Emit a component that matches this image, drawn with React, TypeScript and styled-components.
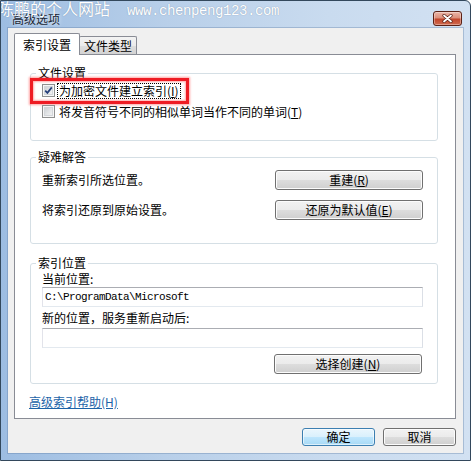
import React from "react";
import styled, { createGlobalStyle } from "styled-components";

const GlobalStyle = createGlobalStyle`
  html, body { margin: 0; padding: 0; background: #ffffff; }
  body {
    font-family: "Noto Sans CJK SC", "Noto Sans", sans-serif;
    font-size: 12px;
    color: #000;
  }
  * { box-sizing: border-box; }
`;

const Window = styled.div`
  position: relative;
  width: 471px;
  height: 461px;
  display: flex;
  flex-direction: column;
  border: 1px solid #33485c;
  border-top-right-radius: 6px;
  background: linear-gradient(to right, #9dbde2 0%, #b8cfe9 35%, #c9dbef 70%, #d2e1f2 100%);
  overflow: hidden;
`;

const Watermark = styled.div`
  position: absolute;
  top: -3px;
  left: -3px;
  z-index: 5;
  display: flex;
  align-items: baseline;
  color: #ffffff;
  font-size: 16px;
  line-height: 20px;
  white-space: nowrap;
  pointer-events: none;
  text-shadow: 0 0 1px rgba(40, 60, 90, 0.45);
`;

const WatermarkUrl = styled.span`
  margin-left: 17px;
  font-family: "Liberation Mono", monospace;
  font-size: 14px;
  letter-spacing: -0.4px;
`;

const TitleBar = styled.div`
  height: 27px;
  flex: none;
  display: flex;
  align-items: flex-start;
  justify-content: space-between;
  padding: 10px 8px 0 11px;
`;

const Title = styled.div`
  margin-top: 1px;
  line-height: 14px;
  color: #1b2734;
  text-shadow: 0 0 4px rgba(255, 255, 255, 0.9);
`;

const CloseButton = styled.div`
  width: 29px;
  height: 15px;
  border: 1px solid #5b2116;
  border-radius: 3px;
  display: flex;
  align-items: center;
  justify-content: center;
  background: linear-gradient(to bottom, #ebb6a8 0%, #dc907c 45%, #c2462c 55%, #d06b4f 100%);
  box-shadow: inset 0 0 0 1px rgba(255, 255, 255, 0.35);
`;

const Client = styled.div`
  flex: 1;
  margin: 0 7px 7px 7px;
  background: #f0f0f0;
  box-shadow: 0 0 0 1px rgba(90, 120, 160, 0.35);
  display: flex;
  flex-direction: column;
  padding: 5px 7px 7px 6px;
`;

const TabStrip = styled.div`
  display: flex;
  align-items: flex-end;
  height: 21px;
  flex: none;
  position: relative;
  z-index: 1;
`;

const Tab = styled.div<{ $active?: boolean }>`
  display: flex;
  align-items: center;
  height: ${(p) => (p.$active ? 22 : 18)}px;
  margin-bottom: ${(p) => (p.$active ? -1 : 0)}px;
  margin-left: ${(p) => (p.$active ? 0 : -1)}px;
  padding: 0 ${(p) => (p.$active ? 8 : 4)}px;
  border: 1px solid #898c95;
  border-bottom: none;
  border-radius: 2px 2px 0 0;
  line-height: 14px;
  background: ${(p) =>
    p.$active
      ? "#ffffff"
      : "linear-gradient(to bottom, #f3f3f3 0%, #ebebeb 50%, #dedede 51%, #d3d3d3 100%)"};
`;

const Panel = styled.div`
  flex: 1;
  border: 1px solid #898c95;
  background: #ffffff;
  padding: 12px 17px 0 15px;
  display: flex;
  flex-direction: column;
`;

const Group = styled.fieldset<{ $top: number; $padTop: number; $padBottom: number }>`
  margin: ${(p) => p.$top}px 0 0 0;
  border: 1px solid #d5dfe5;
  border-radius: 3px;
  padding: ${(p) => p.$padTop}px 14px ${(p) => p.$padBottom}px 11px;
  min-inline-size: 0;
  display: flex;
  flex-direction: column;
`;

const Legend = styled.legend`
  padding: 0 2px;
  margin-left: -6px;
  line-height: 12px;
  font-size: 12px;
`;

const CheckRow = styled.div<{ $highlight?: boolean }>`
  position: relative;
  align-self: flex-start;
  display: flex;
  align-items: center;
  gap: 3px;
  height: 21px;
  ${(p) =>
    p.$highlight
      ? `
    &::after {
      content: "";
      position: absolute;
      left: -12px;
      right: -9px;
      top: -2px;
      bottom: -3px;
      border: 3px solid #ee1c24;
      box-shadow: 0 0 2px 1px rgba(255, 90, 90, 0.55), inset 0 0 2px 1px rgba(255, 90, 90, 0.5);
      pointer-events: none;
    }
  `
      : ""}
`;

const CheckBox = styled.span`
  width: 13px;
  height: 13px;
  flex: none;
  display: flex;
  align-items: center;
  justify-content: center;
  border: 1px solid #8e8f8f;
  background: linear-gradient(135deg, #c4c8cd 0%, #e4e6e8 55%, #f8f8f8 100%);
  box-shadow: inset 0 0 0 1px #f6f6f6, inset 0 0 0 2px #d3d6da;
`;

const CheckText = styled.span<{ $focus?: boolean }>`
  line-height: 14px;
  padding: 0 1px;
  outline: ${(p) => (p.$focus ? "1px dotted #000" : "none")};
  outline-offset: 0;
`;

const Key = styled.span`
  text-decoration: underline;
  text-underline-offset: 1px;
`;

const ActionRow = styled.div<{ $gap?: number }>`
  display: flex;
  align-items: center;
  justify-content: space-between;
  height: 20px;
  margin-top: ${(p) => p.$gap ?? 0}px;
`;

const RowText = styled.span`
  line-height: 14px;
`;

const Button = styled.button<{ $default?: boolean; $w: number; $h: number }>`
  width: ${(p) => p.$w}px;
  height: ${(p) => p.$h}px;
  flex: none;
  padding: 0;
  margin: 0;
  font-family: inherit;
  font-size: 12px;
  line-height: 14px;
  color: #000;
  border: 1px solid ${(p) => (p.$default ? "#3c7fb1" : "#707070")};
  border-radius: 3px;
  background: ${(p) =>
    p.$default
      ? "linear-gradient(to bottom, #eaf6fd 0%, #d9f0fc 50%, #bee6fd 51%, #a7d9f5 100%)"
      : "linear-gradient(to bottom, #f2f2f2 0%, #ebebeb 50%, #dddddd 51%, #cfcfcf 100%)"};
  box-shadow: inset 0 0 0 1px ${(p) => (p.$default ? "rgba(255,255,255,0.6)" : "#fcfcfc")};
`;

const FieldLabel = styled.div<{ $gap: number }>`
  line-height: 14px;
  margin-top: ${(p) => p.$gap}px;
`;

const Field = styled.input<{ $gap: number }>`
  display: block;
  width: 100%;
  height: 20px;
  margin: ${(p) => p.$gap}px 0 0 0;
  padding: 0 0 0 2px;
  border: 1px solid #abadb3;
  border-color: #abadb3 #dbdfe6 #e3e9ef #e2e3ea;
  background: #ffffff;
  font-family: "Liberation Mono", monospace;
  font-size: 11px;
  letter-spacing: -0.6px;
  color: #000;
  outline: none;
`;

const ButtonRight = styled.div<{ $gap: number }>`
  display: flex;
  justify-content: flex-end;
  margin-top: ${(p) => p.$gap}px;
  padding-right: 1px;
`;

const HelpLink = styled.a`
  align-self: flex-start;
  margin: 11px 0 0 -1px;
  line-height: 14px;
  color: #1c63a8;
  text-decoration: underline;
  cursor: pointer;
`;

const Footer = styled.div`
  flex: none;
  display: flex;
  justify-content: flex-end;
  gap: 8px;
  margin-top: 9px;
`;

const Check = () => (
  <svg width="9" height="9" viewBox="0 0 9 9">
    <path d="M1.2 4.6 L3.4 6.9 L7.8 1.4" fill="none" stroke="#263f7a" strokeWidth="1.7" />
  </svg>
);

const CloseX = () => (
  <svg width="11" height="9" viewBox="0 0 11 9">
    <path d="M2 1.5 L9 7.5 M9 1.5 L2 7.5" stroke="#5a2015" strokeWidth="3.2" strokeLinecap="round" />
    <path d="M2 1.5 L9 7.5 M9 1.5 L2 7.5" stroke="#ffffff" strokeWidth="1.8" strokeLinecap="round" />
  </svg>
);

export default function App() {
  return (
    <>
      <GlobalStyle />
      <Window>
        <Watermark>
          陈鹏的个人网站<WatermarkUrl>www.chenpeng123.com</WatermarkUrl>
        </Watermark>
        <TitleBar>
          <Title>高级选项</Title>
          <CloseButton>
            <CloseX />
          </CloseButton>
        </TitleBar>
        <Client>
          <TabStrip>
            <Tab $active>索引设置</Tab>
            <Tab>文件类型</Tab>
          </TabStrip>
          <Panel>
            <Group $top={0} $padTop={1} $padBottom={18}>
              <Legend>文件设置</Legend>
              <CheckRow $highlight>
                <CheckBox>
                  <Check />
                </CheckBox>
                <CheckText $focus>
                  为加密文件建立索引(<Key>I</Key>)
                </CheckText>
              </CheckRow>
              <CheckRow>
                <CheckBox />
                <CheckText>
                  将发音符号不同的相似单词当作不同的单词(<Key>T</Key>)
                </CheckText>
              </CheckRow>
            </Group>
            <Group $top={10} $padTop={7} $padBottom={23}>
              <Legend>疑难解答</Legend>
              <ActionRow>
                <RowText>重新索引所选位置。</RowText>
                <Button $w={148} $h={20}>
                  重建(<Key>R</Key>)
                </Button>
              </ActionRow>
              <ActionRow $gap={10}>
                <RowText>将索引还原到原始设置。</RowText>
                <Button $w={148} $h={20}>
                  还原为默认值(<Key>E</Key>)
                </Button>
              </ActionRow>
            </Group>
            <Group $top={13} $padTop={3} $padBottom={9}>
              <Legend>索引位置</Legend>
              <FieldLabel $gap={0}>当前位置:</FieldLabel>
              <Field $gap={1} readOnly value={"C:\\ProgramData\\Microsoft"} />
              <FieldLabel $gap={4}>新的位置，服务重新启动后:</FieldLabel>
              <Field $gap={3} readOnly value="" />
              <ButtonRight $gap={6}>
                <Button $w={148} $h={20}>
                  选择创建(<Key>N</Key>)
                </Button>
              </ButtonRight>
            </Group>
            <HelpLink>高级索引帮助(H)</HelpLink>
          </Panel>
          <Footer>
            <Button $default $w={73} $h={18}>确定</Button>
            <Button $w={73} $h={18}>取消</Button>
          </Footer>
        </Client>
      </Window>
    </>
  );
}
